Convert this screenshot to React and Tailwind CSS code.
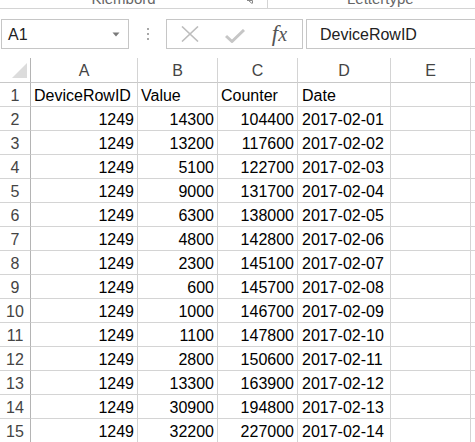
import React from "react";

const rows = [
  ["1249", "14300", "104400", "2017-02-01"],
  ["1249", "13200", "117600", "2017-02-02"],
  ["1249", "5100", "122700", "2017-02-03"],
  ["1249", "9000", "131700", "2017-02-04"],
  ["1249", "6300", "138000", "2017-02-05"],
  ["1249", "4800", "142800", "2017-02-06"],
  ["1249", "2300", "145100", "2017-02-07"],
  ["1249", "600", "145700", "2017-02-08"],
  ["1249", "1000", "146700", "2017-02-09"],
  ["1249", "1100", "147800", "2017-02-10"],
  ["1249", "2800", "150600", "2017-02-11"],
  ["1249", "13300", "163900", "2017-02-12"],
  ["1249", "30900", "194800", "2017-02-13"],
  ["1249", "32200", "227000", "2017-02-14"],
];

const cols = ["A", "B", "C", "D", "E", "F"];

function RowHead({ n }) {
  return (
    <div className="h-[24px] border-r border-b border-r-[#b4b4b4] border-b-[#d4d4d4] flex items-end justify-center pb-[2px] leading-none text-[#444]">
      {n}
    </div>
  );
}

function Cell({ children, right, pl = "pl-[3px]" }) {
  return (
    <div
      className={
        "h-[24px] border-r border-b border-[#d4d4d4] flex items-end pb-[2px] leading-none text-black overflow-hidden whitespace-nowrap " +
        (right ? "justify-end pr-[3px]" : "justify-start " + pl)
      }
    >
      {children}
    </div>
  );
}

export default function App() {
  return (
    <div className="w-[475px] h-[442px] overflow-hidden bg-white font-['Liberation_Sans',Arial,sans-serif] text-[16px]">
      {/* ribbon bottom strip */}
      <div className="h-[9px] border-b border-[#d4d4d4] flex overflow-hidden text-[#666] text-[15px]">
        <div className="w-[268px] flex border-r border-[#d4d4d4] h-[8px] shrink-0">
          <div className="flex-1 flex justify-center">
            <span className="leading-[15px] -mt-[9px] pl-[2px]">Klembord</span>
          </div>
          <div className="w-[22px] flex justify-start">
            <svg width="6" height="4" viewBox="0 0 6 4" className="ml-[2px]">
              <path d="M0 0.5 H5.5 V3.5" stroke="#888" strokeWidth="1" fill="none" />
              <path d="M1.5 0.5 L5 3.5" stroke="#888" strokeWidth="1" fill="none" />
            </svg>
          </div>
        </div>
        <div className="flex-1 flex pl-[79px]">
          <span className="leading-[15px] -mt-[9px]">Lettertype</span>
        </div>
      </div>

      {/* formula bar */}
      <div className="h-[49px] flex items-start pt-[10px]">
        <div className="ml-[1px] w-[128px] h-[30px] border border-[#c6c6c6] flex items-center justify-between shrink-0">
          <span className="pl-[6px] text-[#222] leading-none pt-[1px]">A1</span>
          <svg width="8" height="5" viewBox="0 0 8 5" className="mr-[8px]">
            <path d="M0.5 0.5 H7.5 L4 4.5 Z" fill="#7a7a7a" />
          </svg>
        </div>
        <div className="w-[37px] h-[30px] flex flex-col items-center justify-center gap-[3px] shrink-0">
          <div className="w-[2px] h-[2px] bg-[#a8a8a8]" />
          <div className="w-[2px] h-[2px] bg-[#a8a8a8]" />
          <div className="w-[2px] h-[2px] bg-[#a8a8a8]" />
        </div>
        <div className="w-[137px] h-[30px] border border-[#c6c6c6] flex shrink-0">
          <div className="w-[45px] flex items-center justify-center">
            <svg width="18" height="16" viewBox="0 0 18 16">
              <path d="M1 0.5 L17 15.5 M17 0.5 L1 15.5" stroke="#bdbdbd" strokeWidth="1.6" fill="none" />
            </svg>
          </div>
          <div className="w-[45px] flex items-center justify-center">
            <svg width="20" height="14" viewBox="0 0 20 14" className="mt-[3px]">
              <path d="M1 7 L7 12.5 L19 1" stroke="#c6c6c6" strokeWidth="3" fill="none" strokeLinejoin="round" />
            </svg>
          </div>
          <div className="w-[45px] flex items-center justify-center">
            <span className="font-['Liberation_Serif',serif] italic text-[23px] leading-none text-[#555] -mt-[2px]">
              f<span className="text-[20px]">x</span>
            </span>
          </div>
        </div>
        <div className="ml-[3px] w-[240px] h-[30px] border border-[#c6c6c6] flex items-center shrink-0">
          <span className="pl-[13px] text-[#222] leading-none pt-[1px]">DeviceRowID</span>
        </div>
      </div>

      {/* grid */}
      <div className="grid grid-cols-[31px_107px_80px_80px_93px_80px_80px] w-[551px]">
        {/* header */}
        <div className="h-[25px] border-r border-b border-r-[#b4b4b4] border-b-[#c8c8c8] relative">
          <svg width="31" height="24" viewBox="0 0 31 24" className="absolute left-0 top-0">
            <polygon points="27,5 27,20 12,20" fill="#dcdcdc" />
          </svg>
        </div>
        {cols.map((c) => (
          <div
            key={c}
            className="h-[25px] border-r border-b border-r-[#d4d4d4] border-b-[#c8c8c8] flex items-end justify-center pb-[3px] leading-none text-[#444]"
          >
            {c}
          </div>
        ))}

        {/* row 1 */}
        <RowHead n={1} />
        <Cell>DeviceRowID</Cell>
        <Cell>Value</Cell>
        <Cell>Counter</Cell>
        <Cell pl="pl-[4px]">Date</Cell>
        <Cell />
        <Cell />

        {rows.map((r, i) => (
          <React.Fragment key={i}>
            <RowHead n={i + 2} />
            <Cell right>{r[0]}</Cell>
            <Cell right>{r[1]}</Cell>
            <Cell right>{r[2]}</Cell>
            <Cell pl="pl-[4px]">{r[3]}</Cell>
            <Cell />
            <Cell />
          </React.Fragment>
        ))}
      </div>
    </div>
  );
}
